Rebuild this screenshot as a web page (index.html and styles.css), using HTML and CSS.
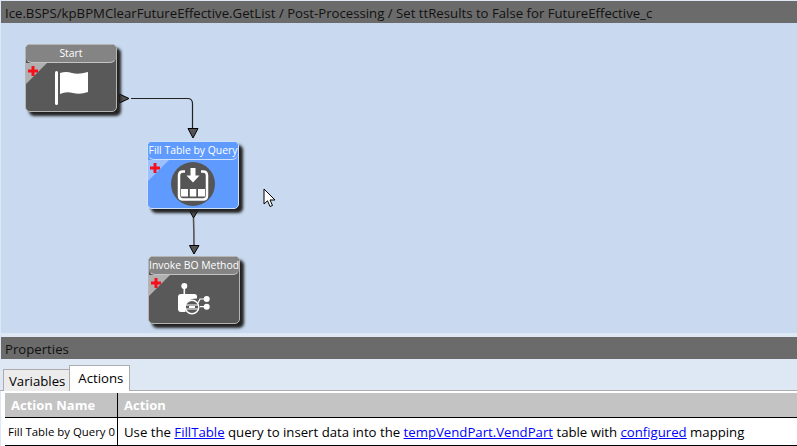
FILE: index.html
```html
<!DOCTYPE html>
<html lang="en">
<head>
    <meta charset="UTF-8">
    <title>Post-Processing</title>
    <link rel="stylesheet" href="styles.css">
</head>
<body>
    <div class="title-bar">Ice.BSPS/kpBPMClearFutureEffective.GetList / Post-Processing / Set ttResults to False for FutureEffective_c</div>

    <div class="canvas">
        <!-- connectors -->
        <svg class="wires" width="797" height="310" viewBox="0 0 797 310">
            <path class="wire" d="M131 75.500H187.500Q192.500 75.500 192.500 80.500V106"/>
            <path class="wire wire-soft" d="M193.500 195Q194 208 194 223"/>
            <path class="arrow" d="M119.500 71L129 75.500L119.500 80Z"/>
            <path class="arrow" d="M188 105.500L198 105.500L193 115Z"/>
            <path class="arrow" d="M189.500 187.500L198 187.500L193.500 195Z"/>
            <path class="arrow" d="M189.500 222.500L199 222.500L194 231Z"/>
        </svg>

        <div class="node node-start">
            <div class="node-title">Start</div>
            <div class="node-body">
                <div class="corner"></div>
                <svg class="plus" width="10" height="10" viewBox="0 0 10 10"><path d="M3.500 0H6.500V3.500H10V6.500H6.500V10H3.500V6.500H0V3.500H3.500Z"/></svg>
                <svg class="icon icon-flag" width="36" height="34" viewBox="0 0 36 34">
                    <rect x="1" y="0" width="3" height="34" rx="1.500" fill="#fff"/>
                    <path d="M6 2Q12 0 18 2T34 1V21Q26 24 19 22T6 23Z" fill="#fff"/>
                </svg>
            </div>
        </div>

        <div class="node node-query">
            <div class="node-title">Fill Table by Query</div>
            <div class="node-body">
                <div class="corner"></div>
                <svg class="plus" width="10" height="10" viewBox="0 0 10 10"><path d="M3.500 0H6.500V3.500H10V6.500H6.500V10H3.500V6.500H0V3.500H3.500Z"/></svg>
                <svg class="icon" width="44" height="44" viewBox="0 0 44 44">
                    <circle cx="22" cy="22" r="22" fill="#555"/>
                    <path d="M14 9.500H12Q8 9.500 8 13.500V33.500Q8 37.500 12 37.500H32Q36 37.500 36 33.500V13.500Q36 9.500 32 9.500H30" fill="none" stroke="#fff" stroke-width="2.500"/>
                    <path d="M19.500 6H24.500V13.500H28.500L22 20.500L15.500 13.500H19.500Z" fill="#fff"/>
                    <rect x="10" y="27" width="7" height="7.500" fill="#fff"/>
                    <rect x="18.800" y="27" width="6.500" height="7.500" fill="#fff"/>
                    <rect x="27" y="27" width="7" height="7.500" fill="#fff"/>
                </svg>
            </div>
        </div>

        <div class="node node-invoke">
            <div class="node-title">Invoke BO Method</div>
            <div class="node-body">
                <div class="corner"></div>
                <svg class="plus" width="10" height="10" viewBox="0 0 10 10"><path d="M3.500 0H6.500V3.500H10V6.500H6.500V10H3.500V6.500H0V3.500H3.500Z"/></svg>
                <svg class="icon" width="32" height="32" viewBox="0 0 32 32">
                    <circle cx="6.300" cy="3" r="3" fill="#fff"/>
                    <rect x="5.500" y="5" width="1.600" height="6" fill="#fff"/>
                    <path d="M3 11H16.500Q19 11 19 13.500V15.500Q10 15 7.500 22V29H3Q0 29 0 26V14Q0 11 3 11Z" fill="#fff"/>
                    <circle cx="28.700" cy="16" r="3" fill="#fff"/>
                    <circle cx="28.700" cy="23.700" r="3" fill="#fff"/>
                    <path d="M20 20L22 16H26M22 23.700H26" fill="none" stroke="#fff" stroke-width="1.200"/>
                    <circle cx="14" cy="24" r="6.800" fill="none" stroke="#fff" stroke-width="1.400"/>
                    <path d="M7.500 22H20.500M7.500 26H20.500" stroke="#fff" stroke-width="1.200"/>
                    <rect x="11" y="23" width="6" height="2" fill="#fff"/>
                </svg>
            </div>
        </div>

        <!-- mouse pointer -->
        <svg class="cursor" width="13" height="20" viewBox="0 0 13 20">
            <path d="M1 1V16L4.500 12.800L7 18.500L9.500 17.500L7 12H12Z" fill="#fff" stroke="#000"/>
        </svg>
    </div>

    <div class="section-bar">Properties</div>

    <div class="tabs">
        <div class="tab tab-vars">Variables</div>
        <div class="tab tab-active">Actions</div>
    </div>

    <div class="table-wrap">
        <table class="actions">
            <thead>
                <tr>
                    <th class="col-name">Action Name</th>
                    <th>Action</th>
                </tr>
            </thead>
            <tbody>
                <tr>
                    <td class="cell-name">Fill Table by Query 0</td>
                    <td>Use the <a href="#">FillTable</a> query to insert data into the <a href="#">tempVendPart.VendPart</a> table with <a href="#">configured</a> mapping</td>
                </tr>
            </tbody>
        </table>
    </div>
</body>
</html>
```

FILE: styles.css
```css
html, body {
    margin: 0;
    padding: 0;
    height: 446px;
    overflow: hidden;
}

body {
    display: flex;
    flex-direction: column;
    padding-top: 1px;
    box-sizing: border-box;
    background: #dee8f5;
    font-family: "Open Sans", "Noto Sans", sans-serif;
    font-size: 13.2px;
    color: #000;
}

.title-bar,
.section-bar {
    height: 22px;
    line-height: 24px;
    margin-left: 1px;
    padding-left: 4px;
    background: #6b6b6b;
    color: #111;
    font-size: 13.2px;
    white-space: nowrap;
    overflow: hidden;
}

/* flow canvas */
.canvas {
    position: relative;
    height: 310px;
    margin-left: 1px;
    background: #c9daf0;
    overflow: hidden;
}

.wires {
    position: absolute;
    left: -1px;
    top: 0;
}

.wire {
    fill: none;
    stroke: #222;
    stroke-width: 1.2;
}

.wire-soft {
    stroke: #555;
    stroke-width: 1.600;
}

.arrow {
    fill: #555;
    stroke: #000;
}

.node {
    position: absolute;
    width: 92px;
    height: 68px;
    display: flex;
    flex-direction: column;
    box-sizing: border-box;
    border: 1px solid #b5b5b5;
    border-radius: 5px;
    background: #595959;
    box-shadow: 4px 4px 3px #222;
}

.node-start { left: 24px; top: 21px; }
.node-query { left: 146px; top: 118px; background: #5f9bff; border-color: #cfe0fb; }
.node-invoke { left: 147px; top: 233px; }

.node-title {
    height: 18px;
    line-height: 17px;
    box-sizing: border-box;
    background: #848484;
    border-bottom: 1px solid #c4c4c4;
    border-radius: 4px 4px 6px 6px;
    color: #fff;
    text-align: center;
    font-size: 10.4px;
    white-space: nowrap;
}

.node-query .node-title {
    background: #5f9bff;
    border-bottom-color: #cfe0fb;
}

.node-body {
    position: relative;
    flex: 1;
    display: flex;
    align-items: center;
    justify-content: center;
}

.corner {
    position: absolute;
    left: 0;
    top: 0;
    width: 0;
    height: 0;
    border-top: 21px solid #b0b0b0;
    border-right: 21px solid transparent;
}

.node-query .corner {
    border-top-color: #9cc1fd;
}

.plus {
    position: absolute;
    left: 2px;
    top: 3px;
    fill: #f5101c;
}

.icon {
    position: relative;
}

.icon-flag {
    left: 1px;
    top: 1px;
}

.cursor {
    position: absolute;
    left: 262px;
    top: 165px;
}

/* properties */
.section-bar {
    margin-top: 4px;
}

.tabs {
    display: flex;
    align-items: flex-end;
    height: 32px;
    padding-left: 3px;
    box-sizing: border-box;
    border-bottom: 1px solid #acacac;
    background: #dee8f5;
}

.tab {
    height: 22px;
    line-height: 22px;
    box-sizing: border-box;
    margin-bottom: -1px;
    background: #ececec;
    border: 1px solid #acacac;
    border-bottom: none;
}

.tab-vars {
    padding: 0 4px 0 5px;
}

.tab-active {
    height: 26px;
    line-height: 25px;
    padding: 0 6px 0 8px;
    margin-left: -1px;
    background: #fff;
}

.table-wrap {
    flex: 1;
    padding: 2px 0 0 4px;
    background: #fff;
    border-left: 1px solid #dee8f5;
}

.actions {
    width: 100%;
    border-collapse: collapse;
    table-layout: fixed;
}

.actions th {
    height: 24px;
    padding: 0 6px;
    background: #c3c3c3;
    color: #fff;
    font-size: 13px;
    font-weight: 700;
    text-align: left;
    border-bottom: 1px solid #000;
}

.col-name {
    width: 100px;
    border-right: 1px solid #000;
}

.actions td {
    height: 27px;
    padding: 0 6px;
    white-space: nowrap;
    border-bottom: 1px solid #000;
}

.actions .cell-name {
    padding: 0 3px;
    font-size: 11.4px;
    border-right: 1px solid #000;
}

.actions a {
    color: #0000ff;
}
```
